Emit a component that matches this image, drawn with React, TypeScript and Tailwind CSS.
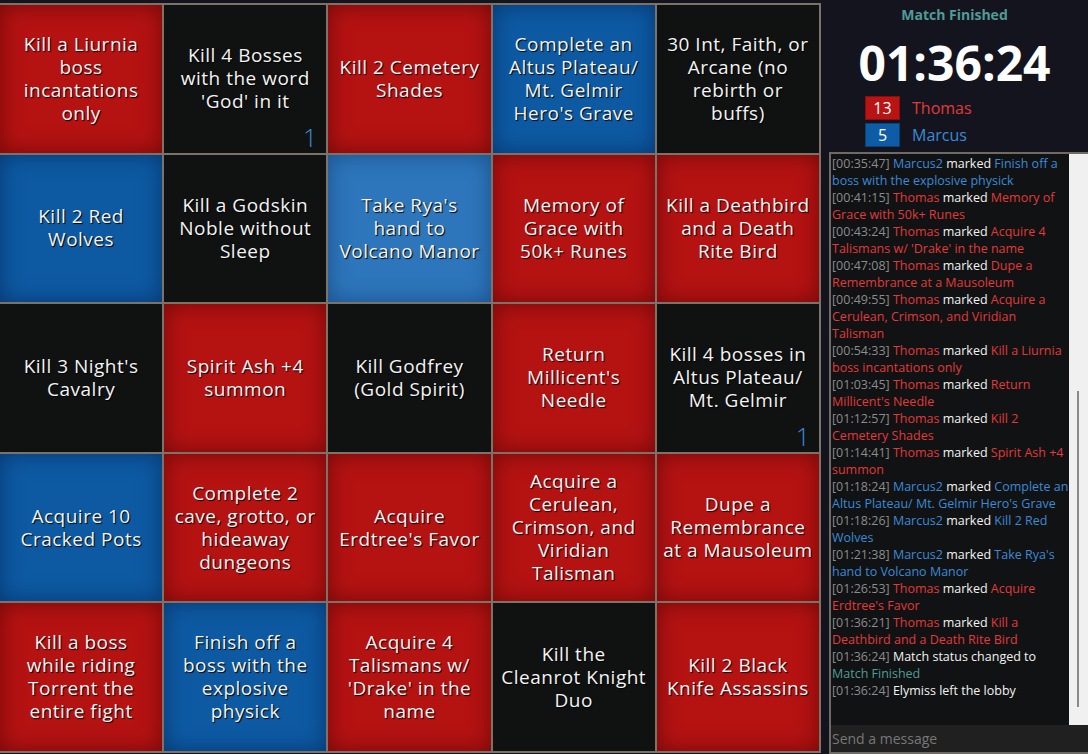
import React from "react";

type Tone = "red" | "black" | "blue" | "lightblue";

interface Square {
  lines: string[];
  tone: Tone;
  mark?: string;
}

const BOARD: Square[] = [
  { tone: "red", lines: ["Kill a Liurnia", "boss", "incantations", "only"] },
  { tone: "black", lines: ["Kill 4 Bosses", "with the word", "'God' in it"], mark: "1" },
  { tone: "red", lines: ["Kill 2 Cemetery", "Shades"] },
  { tone: "blue", lines: ["Complete an", "Altus Plateau/", "Mt. Gelmir", "Hero's Grave"] },
  { tone: "black", lines: ["30 Int, Faith, or", "Arcane (no", "rebirth or", "buffs)"] },

  { tone: "blue", lines: ["Kill 2 Red", "Wolves"] },
  { tone: "black", lines: ["Kill a Godskin", "Noble without", "Sleep"] },
  { tone: "lightblue", lines: ["Take Rya's", "hand to", "Volcano Manor"] },
  { tone: "red", lines: ["Memory of", "Grace with", "50k+ Runes"] },
  { tone: "red", lines: ["Kill a Deathbird", "and a Death", "Rite Bird"] },

  { tone: "black", lines: ["Kill 3 Night's", "Cavalry"] },
  { tone: "red", lines: ["Spirit Ash +4", "summon"] },
  { tone: "black", lines: ["Kill Godfrey", "(Gold Spirit)"] },
  { tone: "red", lines: ["Return", "Millicent's", "Needle"] },
  { tone: "black", lines: ["Kill 4 bosses in", "Altus Plateau/", "Mt. Gelmir"], mark: "1" },

  { tone: "blue", lines: ["Acquire 10", "Cracked Pots"] },
  { tone: "red", lines: ["Complete 2", "cave, grotto, or", "hideaway", "dungeons"] },
  { tone: "red", lines: ["Acquire", "Erdtree's Favor"] },
  { tone: "red", lines: ["Acquire a", "Cerulean,", "Crimson, and", "Viridian", "Talisman"] },
  { tone: "red", lines: ["Dupe a", "Remembrance", "at a Mausoleum"] },

  { tone: "red", lines: ["Kill a boss", "while riding", "Torrent the", "entire fight"] },
  { tone: "blue", lines: ["Finish off a", "boss with the", "explosive", "physick"] },
  { tone: "red", lines: ["Acquire 4", "Talismans w/", "'Drake' in the", "name"] },
  { tone: "black", lines: ["Kill the", "Cleanrot Knight", "Duo"] },
  { tone: "red", lines: ["Kill 2 Black", "Knife Assassins"] },
];

const TONE_CLASS: Record<Tone, string> = {
  red: "bg-[#b51212] shadow-[inset_0_0_22px_rgba(60,0,0,0.55)]",
  black: "bg-[#101212]",
  blue: "bg-[#0d5aa3] shadow-[inset_0_0_22px_rgba(0,20,60,0.5)]",
  lightblue: "bg-[#2d76bb] shadow-[inset_0_0_22px_rgba(0,30,80,0.45)]",
};

// chat colours
const C = {
  time: "text-[#8c8c8c]",
  white: "text-[#f2f2f2]",
  red: "text-[#e03a3a]",
  blue: "text-[#3a8ad8]",
  teal: "text-[#4f9c96]",
};

type Seg = [string, string];

function marked(time: string, who: "Thomas" | "Marcus2", goal: string): Seg[] {
  const col = who === "Thomas" ? C.red : C.blue;
  return [
    [`[${time}] `, C.time],
    [who, col],
    [" marked ", C.white],
    [goal, col],
  ];
}

const LOG: Seg[][] = [
  marked("00:35:47", "Marcus2", "Finish off a\nboss with the explosive physick"),
  marked("00:41:15", "Thomas", "Memory of\nGrace with 50k+ Runes"),
  marked("00:43:24", "Thomas", "Acquire 4\nTalismans w/ 'Drake' in the name"),
  marked("00:47:08", "Thomas", "Dupe a\nRemembrance at a Mausoleum"),
  marked("00:49:55", "Thomas", "Acquire a\nCerulean, Crimson, and Viridian\nTalisman"),
  marked("00:54:33", "Thomas", "Kill a Liurnia\nboss incantations only"),
  marked("01:03:45", "Thomas", "Return\nMillicent's Needle"),
  marked("01:12:57", "Thomas", "Kill 2\nCemetery Shades"),
  marked("01:14:41", "Thomas", "Spirit Ash +4\nsummon"),
  marked("01:18:24", "Marcus2", "Complete an\nAltus Plateau/ Mt. Gelmir Hero's Grave"),
  marked("01:18:26", "Marcus2", "Kill 2 Red\nWolves"),
  marked("01:21:38", "Marcus2", "Take Rya's\nhand to Volcano Manor"),
  marked("01:26:53", "Thomas", "Acquire\nErdtree's Favor"),
  marked("01:36:21", "Thomas", "Kill a\nDeathbird and a Death Rite Bird"),
  [
    ["[01:36:24] ", C.time],
    ["Match status changed to\n", C.white],
    ["Match Finished", C.teal],
  ],
  [
    ["[01:36:24] ", C.time],
    ["Elymiss left the lobby", C.white],
  ],
];

// break a message's segments into visual lines at "\n"
function toLines(msg: Seg[]): Seg[][] {
  const out: Seg[][] = [[]];
  msg.forEach(([text, cls]) => {
    text.split("\n").forEach((part, i) => {
      if (i > 0) out.push([]);
      if (part) out[out.length - 1].push([part, cls]);
    });
  });
  return out;
}

function Cell({ sq }: { sq: Square }) {
  return (
    <div className={`relative flex flex-col items-center justify-center text-center ${TONE_CLASS[sq.tone]}`}>
      {sq.lines.map((l, i) => (
        <div
          key={i}
          className="whitespace-nowrap text-[19px] leading-[23px] tracking-[0.5px] text-[#f3f3f3] [text-shadow:1px_1px_1px_#000]"
        >
          {l}
        </div>
      ))}
      {sq.mark && (
        <span className="absolute bottom-[3px] right-[9px] text-[25px] font-light leading-none text-[#3a8ad8]">
          {sq.mark}
        </span>
      )}
    </div>
  );
}

function ScoreRow({ n, name, box, text }: { n: number; name: string; box: string; text: string }) {
  return (
    <div className="flex items-center gap-3">
      <div className={`flex h-[24px] w-[35px] items-center justify-center text-[16px] text-white ${box}`}>{n}</div>
      <span className={`text-[16px] ${text}`}>{name}</span>
    </div>
  );
}

export default function App() {
  return (
    <div
      className="flex h-[754px] w-[1088px] overflow-hidden bg-[#14141f]"
      style={{ fontFamily: '"Open Sans", "Noto Sans", sans-serif' }}
    >
      {/* ── Board ─────────────────────────────────────────────────────── */}
      <div className="ml-[-2px] mt-[3px] grid h-[750px] w-[823px] shrink-0 grid-cols-5 grid-rows-5 gap-[2px] bg-[#7b7367] p-[2px]">
        {BOARD.map((sq, i) => (
          <Cell key={i} sq={sq} />
        ))}
      </div>

      {/* ── Side panel ────────────────────────────────────────────────── */}
      <div className="flex min-w-0 flex-1 flex-col">
        <div className="pt-[4px] text-center text-[14px] font-bold text-[#4f9c96]">Match Finished</div>
        <div className="mt-[10px] text-center text-[48px] font-bold leading-[56px] text-white">01:36:24</div>
        <div className="ml-[44px] mt-[5px] flex flex-col gap-[3px]">
          <ScoreRow n={13} name="Thomas" box="bg-[#b81414] border border-[#8c0c0c]" text="text-[#e03a3a]" />
          <ScoreRow n={5} name="Marcus" box="bg-[#0f5ca6] border border-[#0a3f78]" text="text-[#3a8ad8]" />
        </div>

        {/* ── Chat ──────────────────────────────────────────────────── */}
        <div className="ml-[8px] mt-[5px] flex min-h-0 flex-1 flex-col border-2 border-r-0 border-[#6f6a63] bg-[#111213]">
          <div className="flex min-h-0 flex-1">
            <div className="min-w-0 flex-1 overflow-hidden pl-[1px] pt-[1px]">
              {LOG.map((msg, i) => (
                <div key={i}>
                  {toLines(msg).map((line, k) => (
                    <div key={k} className="h-[17px] whitespace-pre text-[12.5px] leading-[17px]">
                      {line.map(([t, c], j) => (
                        <span key={j} className={c}>
                          {t}
                        </span>
                      ))}
                    </div>
                  ))}
                </div>
              ))}
            </div>
            <div className="relative w-[19px] shrink-0 bg-[#f0f0f0]">
              <div className="absolute left-[8px] top-[237px] h-[316px] w-[2px] bg-[#8a8a8a]" />
            </div>
          </div>
          <div className="flex h-[27px] items-center bg-[#202020] pl-[1px] text-[14px] text-[#777]">
            Send a message
          </div>
        </div>
      </div>
    </div>
  );
}
